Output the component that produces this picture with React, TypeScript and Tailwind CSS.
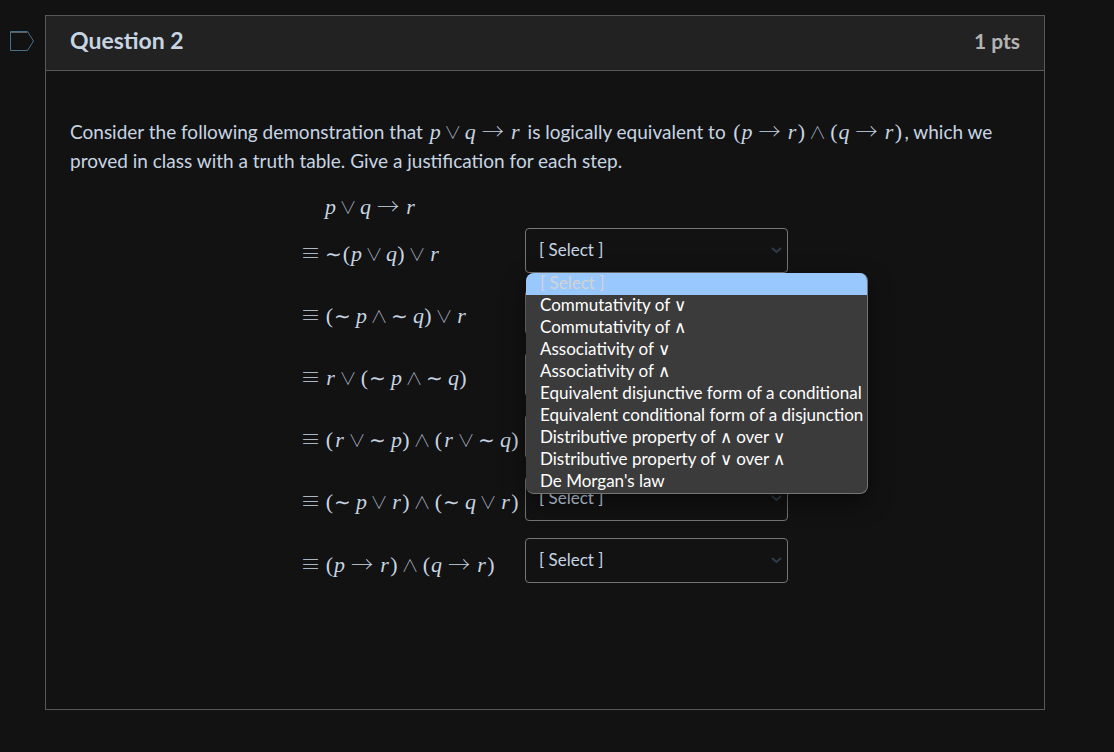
import { useState } from "react";
import clsx from "clsx";

const OPTIONS = [
  "[ Select ]",
  "Commutativity of ∨",
  "Commutativity of ∧",
  "Associativity of ∨",
  "Associativity of ∧",
  "Equivalent disjunctive form of a conditional",
  "Equivalent conditional form of a disjunction",
  "Distributive property of ∧ over ∨",
  "Distributive property of ∨ over ∧",
  "De Morgan's law",
];

const STEPS = [
  "~(p∨q)∨r",
  "(~ p∧~ q)∨r",
  "r∨(~ p∧~ q)",
  "(r∨~ p)∧(r∨~ q)",
  "(~ p∨r)∧(~ q∨r)",
  "(p→r)∧(q→r)",
];

// spacing follows TeX: binary operators get a medium space, relations a thick one
const TOKENS: Record<string, string> = {
  p: "w-[11px] italic",
  q: "w-[11px] italic",
  r: "w-[11px] italic",
  "(": "w-[9px]",
  ")": "w-[8px]",
  "∨": "w-[14px] mx-[5px] text-[17px] font-['Noto_Sans_CJK_JP',sans-serif] font-thin",
  "∧": "w-[14px] mx-[5px] text-[17px] font-['Noto_Sans_CJK_JP',sans-serif] font-thin",
  "→": "w-[22px] mx-[6px] font-['Noto_Sans_CJK_JP',sans-serif] font-thin",
  "~": "w-[17px] text-[20px] font-['Noto_Sans_CJK_JP',sans-serif] font-thin",
  "≡": "w-[17px] mr-[6px] text-[20px] font-['Noto_Sans_CJK_JP',sans-serif] font-thin",
  " ": "w-[5px]",
};

function Formula({ tex, className }: { tex: string; className?: string }) {
  return (
    <span
      className={clsx(
        "inline-flex items-baseline whitespace-pre font-['Liberation_Serif',serif] text-[22px] leading-[22px]",
        className
      )}
    >
      {[...tex].map((char, i) => (
        <span key={i} className={clsx("flex justify-center", TOKENS[char])}>
          {char === "~" ? "∼" : char}
        </span>
      ))}
    </span>
  );
}

function OptionList({ onPick }: { onPick: (value: string) => void }) {
  return (
    <ul
      role="listbox"
      aria-label="Justification"
      className="absolute left-px top-full z-10 w-[342px] overflow-hidden rounded-lg border-b border-r border-[#757575] bg-[#3b3b3b] text-[17px] leading-[20px] text-white shadow-[0_8px_24px_rgba(0,0,0,0.45)]"
    >
      {OPTIONS.map((option, i) => (
        <li
          key={option}
          role="option"
          aria-selected={i === 0}
          onClick={() => onPick(option)}
          className={clsx(
            "whitespace-nowrap pl-[14px] pb-[2px]",
            i === 0 && "bg-[#99c8ff] text-[#d3d3d3]"
          )}
        >
          {option}
        </li>
      ))}
    </ul>
  );
}

function JustificationSelect({
  step,
  defaultOpen = false,
}: {
  step: number;
  defaultOpen?: boolean;
}) {
  const [value, setValue] = useState(OPTIONS[0]);
  const [open, setOpen] = useState(defaultOpen);

  return (
    <div className="relative w-[263px]">
      <select
        aria-label={`Justification for step ${step}`}
        value={value}
        onChange={(e) => setValue(e.target.value)}
        className="block h-[45px] w-full appearance-none rounded border border-[#757575] bg-transparent px-[13px] pb-[2px] text-[17px] text-[#c7d5e3]"
      >
        {OPTIONS.map((option) => (
          <option key={option}>{option}</option>
        ))}
      </select>
      <svg
        className="pointer-events-none absolute right-[6px] top-[19px] h-[7px] w-[11px]"
        viewBox="0 0 11 7"
        fill="none"
        stroke="#2f3d49"
        strokeWidth="2"
      >
        <path d="M1 1l4.5 4L10 1" />
      </svg>
      {open && (
        <OptionList
          onPick={(picked) => {
            setValue(picked);
            setOpen(false);
          }}
        />
      )}
    </div>
  );
}

export default function App() {
  return (
    <div className="min-h-screen bg-[#121212] py-[15px] pl-[9px] pr-[69px] font-['Lato',sans-serif] text-[#c7d5e3]">
      <div className="flex items-start">
        <button
          type="button"
          aria-label="Flag question"
          className="mt-[15px] w-9 shrink-0"
        >
          <svg
            className="h-[22px] w-[26px]"
            viewBox="0 0 26 22"
            fill="none"
            stroke="#477088"
          >
            <path d="M1.5 1.5H18.5L24.5 11L18.5 20.5H1.5Z" />
            <path d="M2 2.5H18.5" stroke="#56616a" />
          </svg>
        </button>

        <section className="min-h-[695px] min-w-0 flex-1 border border-[#575757]">
          <header className="flex h-[55px] items-center justify-between border-b border-[#575757] bg-[#222222] px-6 pb-[5px] font-bold">
            <h2 className="text-[23px]">Question 2</h2>
            <span className="text-[21px] text-[#b3b3b3]">1 pts</span>
          </header>

          <div className="px-6 pt-[46px]">
            <p className="text-[19px] leading-[29px]">
              Consider the following demonstration that{" "}
              <Formula tex="p∨q→r" className="mx-[2px]" /> is logically
              equivalent to{" "}
              <Formula tex="(p→r)∧(q→r)" className="mx-[2px]" />, which we
              proved in class with a truth table. Give a justification for each
              step.
            </p>

            <table className="mx-auto mt-[18px]">
              <tbody>
                <tr>
                  <td className="h-[35px] pl-[23px] align-top">
                    <Formula tex="p∨q→r" />
                  </td>
                  <td />
                </tr>
                {STEPS.map((tex, i) => (
                  <tr key={tex}>
                    <td className="pt-[6px] pb-4">
                      <Formula tex={`≡${tex}`} />
                    </td>
                    <td className="pb-[17px] pl-[6px]">
                      <JustificationSelect step={i + 1} defaultOpen={i === 0} />
                    </td>
                  </tr>
                ))}
              </tbody>
            </table>
          </div>
        </section>
      </div>
    </div>
  );
}
